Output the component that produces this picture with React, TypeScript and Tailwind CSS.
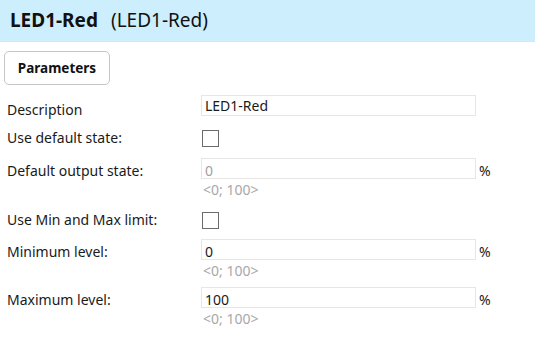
import React from "react";

const font = { fontFamily: '"Segoe UI", "Noto Sans", sans-serif' };

function NumRow({ label, value, disabled }: { label: string; value: string; disabled?: boolean }) {
  return (
    <div className="flex items-start">
      <div className="w-[201px] shrink-0 pl-[7px] h-[21px] text-[14px] leading-[25px] text-[#1a1a1a]">{label}</div>
      <div className="flex flex-col">
        <div className="flex items-start">
          <div
            className={`w-[275px] h-[21px] border border-[#e6e6e6] px-[3px] text-[14px] leading-[23px] ${
              disabled ? "text-[#a0a0a0]" : "text-[#1a1a1a]"
            }`}
          >
            {value}
          </div>
          <span className="ml-[3px] h-[21px] text-[14px] leading-[25px] text-[#1a1a1a]">%</span>
        </div>
        <div className="pl-[2px] h-[22px] leading-[22px] text-[14px] text-[#a8a8a8]">&lt;0; 100&gt;</div>
      </div>
    </div>
  );
}

function CheckRow({ label }: { label: string }) {
  return (
    <div className="flex items-start h-[17px]">
      <div className="w-[201px] shrink-0 pl-[7px] h-[17px] text-[14px] leading-[15px] text-[#1a1a1a]">{label}</div>
      <div className="ml-[1px] w-[17px] h-[17px] border border-[#6b6b6b] bg-white" />
    </div>
  );
}

export default function App() {
  return (
    <div className="w-[535px] h-[357px] bg-white overflow-hidden" style={font}>
      <div className="h-[42px] bg-[#cdeefd] border-b border-[#e3e3e3] flex items-center pl-[10px]">
        <span className="text-[19px] font-bold text-[#111]">LED1-Red</span>
        <span className="ml-[13px] text-[19px] text-[#111]">(LED1-Red)</span>
      </div>
      <div className="pl-[4px] pt-[9px]">
        <div className="w-[106px] h-[34px] rounded-[5px] border border-[#c6c6c6] bg-white flex items-center justify-center text-[13.5px] font-bold text-[#111]">
          Parameters
        </div>
      </div>
      <div className="mt-[10px] flex flex-col">
        <div className="flex items-start h-[21px]">
          <div className="w-[201px] shrink-0 pl-[7px] h-[21px] text-[14px] leading-[29px] text-[#1a1a1a]">Description</div>
          <div className="w-[275px] h-[21px] border border-[#e6e6e6] px-[3px] text-[14px] leading-[19px] text-[#1a1a1a]">
            LED1-Red
          </div>
        </div>
        <div className="mt-[14px]">
          <CheckRow label="Use default state:" />
        </div>
        <div className="mt-[11px]">
          <NumRow label="Default output state:" value="0" disabled />
        </div>
        <div className="mt-[11px]">
          <CheckRow label="Use Min and Max limit:" />
        </div>
        <div className="mt-[10px]">
          <NumRow label="Minimum level:" value="0" />
        </div>
        <div className="mt-[5px]">
          <NumRow label="Maximum level:" value="100" />
        </div>
      </div>
    </div>
  );
}
